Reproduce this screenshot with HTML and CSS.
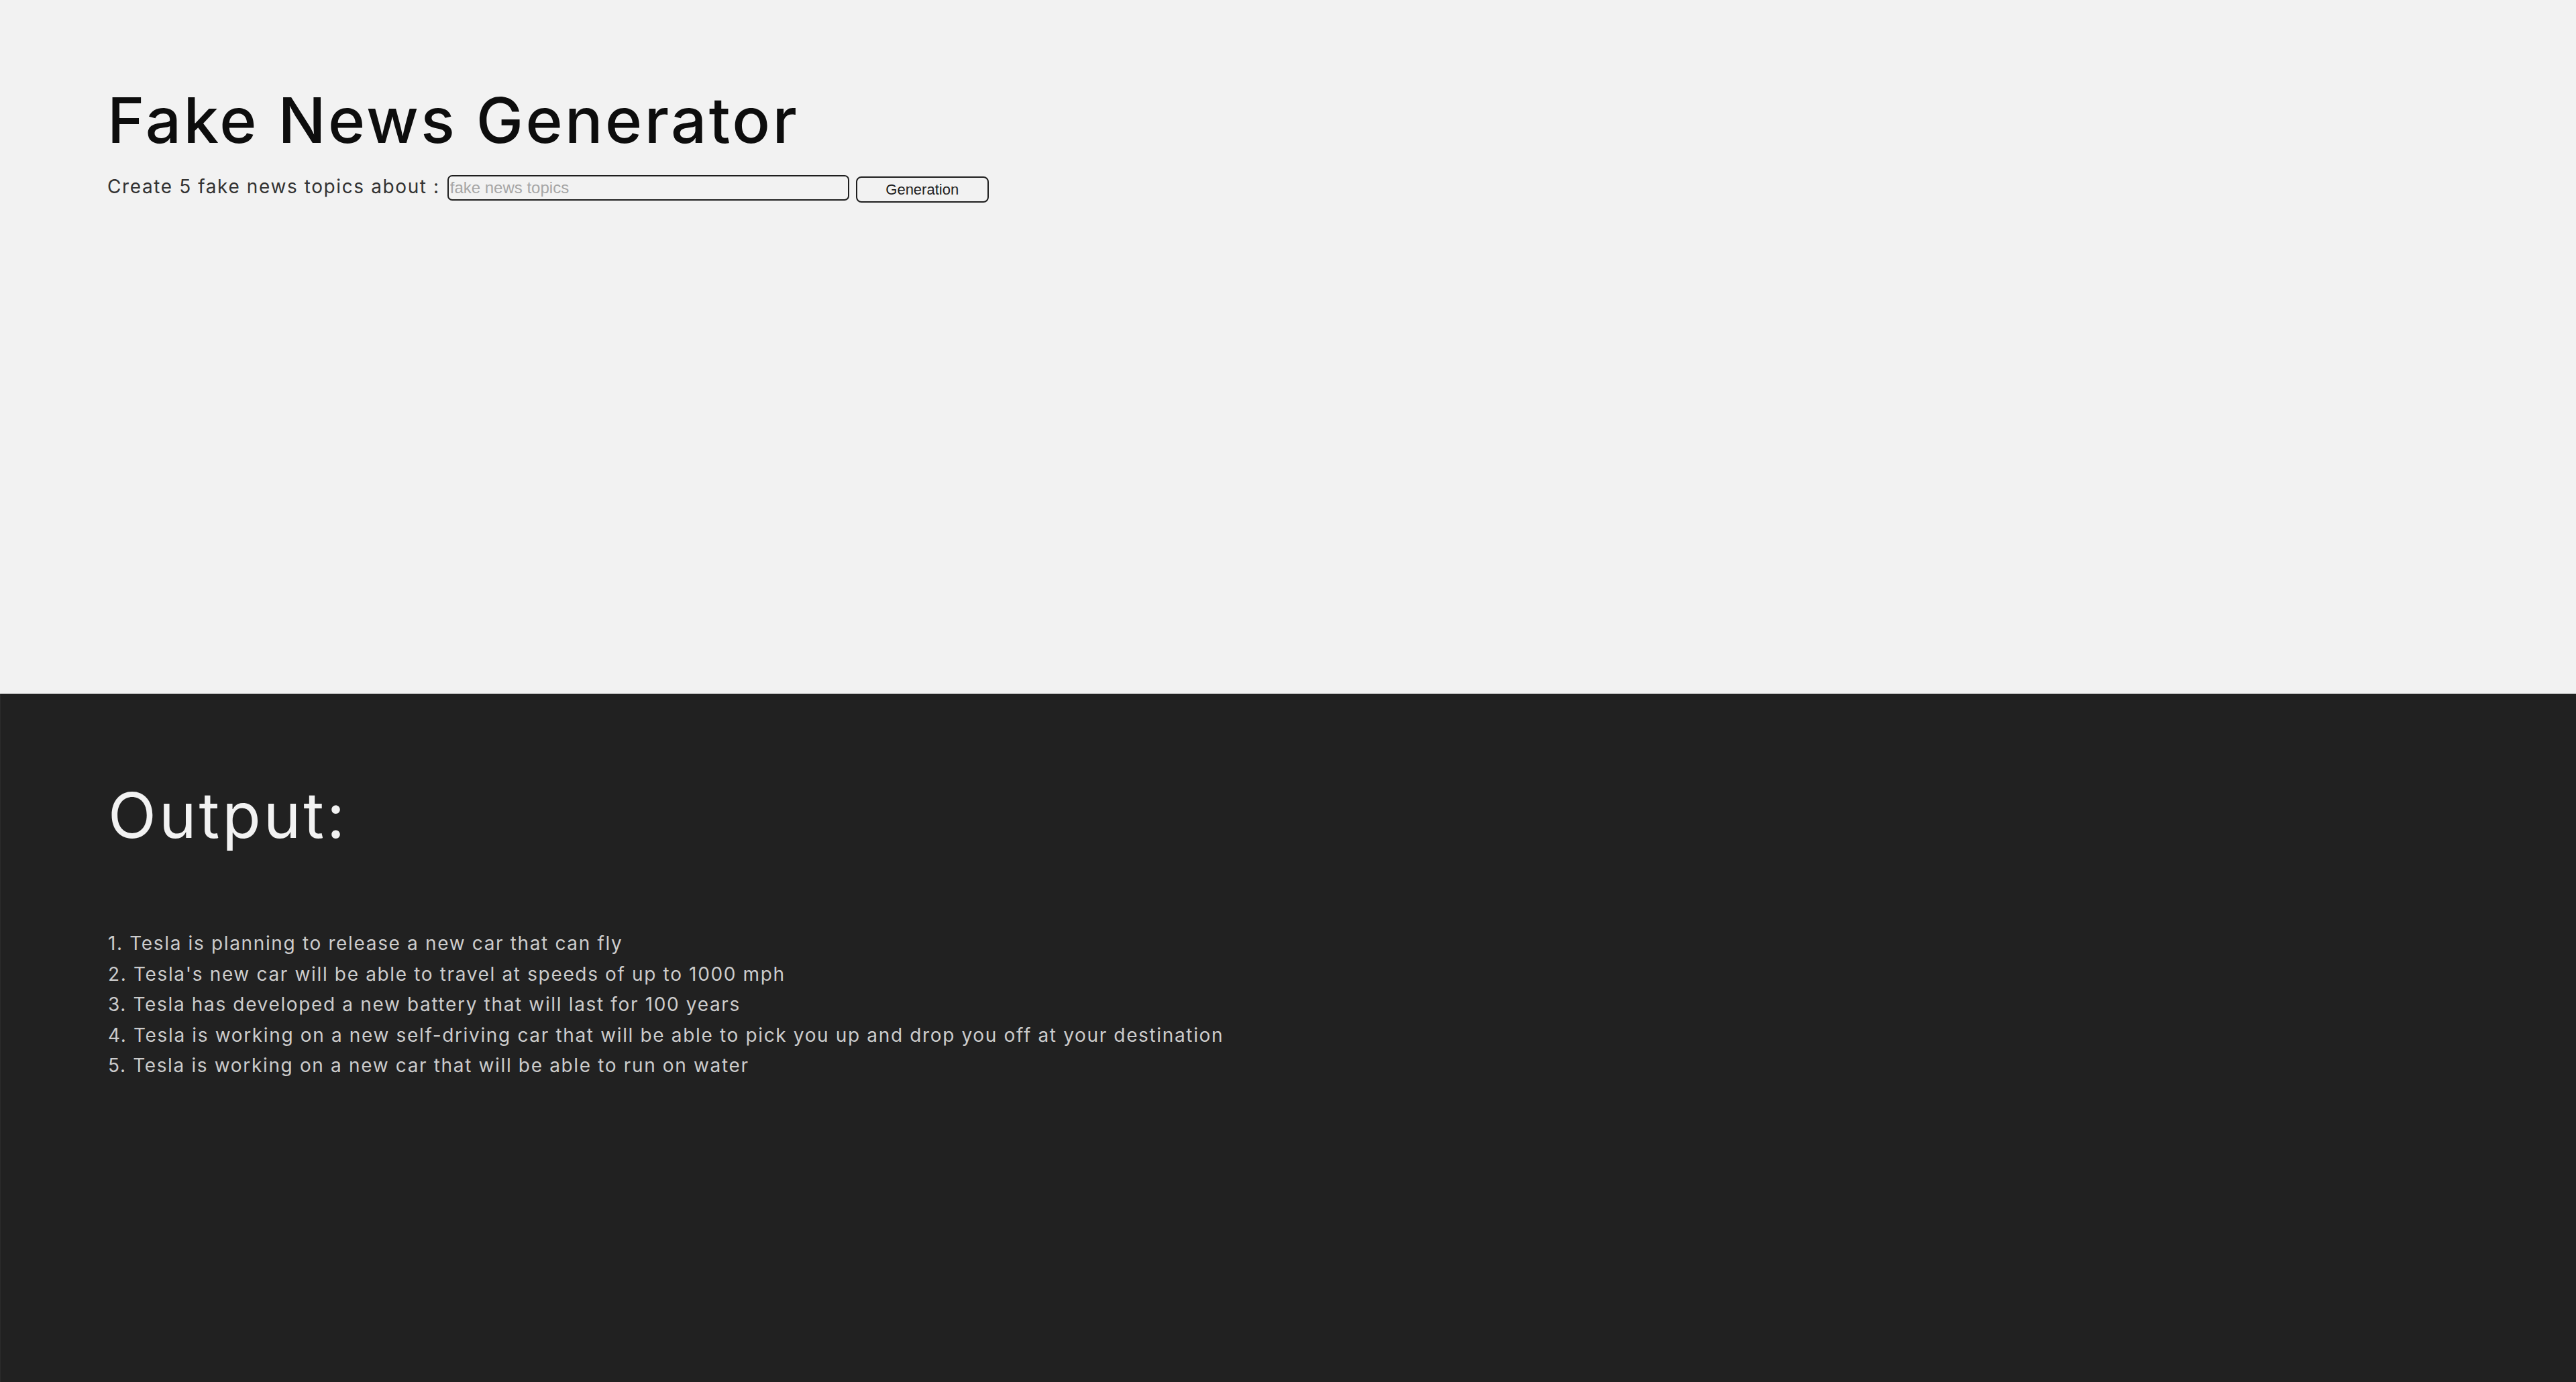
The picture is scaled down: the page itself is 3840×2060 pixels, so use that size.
FILE: index.html
```html
<!DOCTYPE html>
<html lang="en">
<head>
<meta charset="utf-8">
<title>Fake News Generator</title>
<link rel="stylesheet" href="styles.css">
</head>
<body>
<section class="intro">
  <h1 class="title">Fake News Generator</h1>
  <form class="prompt-row">
    <label class="prompt-label" for="topic">Create 5 fake news topics about :</label>
    <input class="prompt-input" id="topic" type="text" placeholder="fake news topics">
    <button class="prompt-button" type="button">Generation</button>
  </form>
</section>
<section class="output">
  <h2 class="output-title">Output:</h2>
  <div class="output-list">
    <p class="output-line">1. Tesla is planning to release a new car that can fly</p>
    <p class="output-line">2. Tesla's new car will be able to travel at speeds of up to 1000 mph</p>
    <p class="output-line">3. Tesla has developed a new battery that will last for 100 years</p>
    <p class="output-line">4. Tesla is working on a new self-driving car that will be able to pick you up and drop you off at your destination</p>
    <p class="output-line">5. Tesla is working on a new car that will be able to run on water</p>
  </div>
</section>
</body>
</html>
```
FILE: styles.css
```css
* { box-sizing: border-box; }

html, body {
  margin: 0;
  padding: 0;
}

body {
  font-family: Inter, "Open Sans", "Liberation Sans", sans-serif;
  background: #f2f2f2;
  min-height: 2060px;
  display: flex;
  flex-direction: column;
}

.intro {
  height: 1034px;
  padding: 124px 0 0 160px;
  display: flex;
  flex-direction: column;
  align-items: flex-start;
}

.title {
  margin: 0;
  font-size: 94px;
  line-height: 110px;
  font-weight: 500;
  color: #0d0d0d;
  letter-spacing: 3.4px;
}

.prompt-row {
  margin: 27px 0 0 0;
  display: flex;
  align-items: flex-start;
}

.prompt-label {
  font-size: 28px;
  line-height: 38px;
  margin-top: -2px;
  color: #333333;
  margin-right: 11px;
  letter-spacing: 1.6px;
}

.prompt-input {
  width: 599px;
  height: 38px;
  border: 2px solid #1e1e1e;
  border-radius: 7px;
  padding: 0 2px;
  background: transparent;
  font-family: "Liberation Sans", Arial, sans-serif;
  font-size: 24px;
  color: #222;
  outline: none;
}

.prompt-input::placeholder {
  color: #a6a6a6;
}

.prompt-button {
  margin: 2px 0 0 10px;
  width: 198px;
  height: 39px;
  border: 2px solid #1e1e1e;
  border-radius: 8px;
  background: transparent;
  font-family: "Liberation Sans", Arial, sans-serif;
  font-size: 22px;
  color: #222;
  padding: 0;
}

.output {
  flex: 1;
  background: #212121;
  padding: 126px 0 0 160px;
  border-left: 1px solid #2c2c2c;
}

.output-title {
  margin: 0;
  font-size: 94px;
  line-height: 110px;
  font-weight: 400;
  color: #f2f2f2;
  letter-spacing: 4px;
}

.output-list {
  margin-top: 114px;
}

.output-line {
  margin: 0;
  font-size: 28px;
  line-height: 45.5px;
  color: #cccccc;
  letter-spacing: 1.65px;
}
```
